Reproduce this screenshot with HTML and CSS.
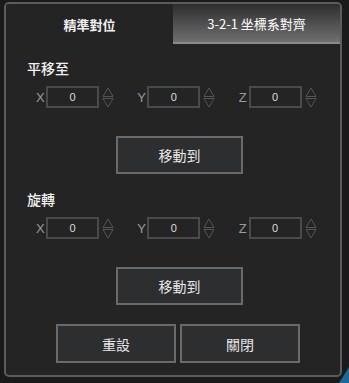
FILE: index.html
```html
<!DOCTYPE html>
<html>
<head>
<meta charset="utf-8">
<link rel="stylesheet" href="styles.css">
</head>
<body>
<div class="panel">
  <div class="tabs">
    <div class="tab active">精準對位</div>
    <div class="tab">3-2-1 坐標系對齊</div>
  </div>
  <div class="content">
    <div class="title t1">平移至</div>
    <div class="row">
      <div class="grp"><span class="lbl">X</span><span class="box">0</span><span class="spin"><svg width="12" height="21" viewBox="0 0 12 21"><path d="M1 9.5 L6 1 L11 9.5 Z M1 11.5 L6 20 L11 11.5 Z" fill="none" stroke="#555" stroke-width="1"/></svg></span></div>
      <div class="grp"><span class="lbl">Y</span><span class="box">0</span><span class="spin"><svg width="12" height="21" viewBox="0 0 12 21"><path d="M1 9.5 L6 1 L11 9.5 Z M1 11.5 L6 20 L11 11.5 Z" fill="none" stroke="#555" stroke-width="1"/></svg></span></div>
      <div class="grp"><span class="lbl">Z</span><span class="box">0</span><span class="spin"><svg width="12" height="21" viewBox="0 0 12 21"><path d="M1 9.5 L6 1 L11 9.5 Z M1 11.5 L6 20 L11 11.5 Z" fill="none" stroke="#555" stroke-width="1"/></svg></span></div>
    </div>
    <div class="center"><div class="btn move">移動到</div></div>
    <div class="title t2">旋轉</div>
    <div class="row">
      <div class="grp"><span class="lbl">X</span><span class="box">0</span><span class="spin"><svg width="12" height="21" viewBox="0 0 12 21"><path d="M1 9.5 L6 1 L11 9.5 Z M1 11.5 L6 20 L11 11.5 Z" fill="none" stroke="#555" stroke-width="1"/></svg></span></div>
      <div class="grp"><span class="lbl">Y</span><span class="box">0</span><span class="spin"><svg width="12" height="21" viewBox="0 0 12 21"><path d="M1 9.5 L6 1 L11 9.5 Z M1 11.5 L6 20 L11 11.5 Z" fill="none" stroke="#555" stroke-width="1"/></svg></span></div>
      <div class="grp"><span class="lbl">Z</span><span class="box">0</span><span class="spin"><svg width="12" height="21" viewBox="0 0 12 21"><path d="M1 9.5 L6 1 L11 9.5 Z M1 11.5 L6 20 L11 11.5 Z" fill="none" stroke="#555" stroke-width="1"/></svg></span></div>
    </div>
    <div class="center"><div class="btn move">移動到</div></div>
    <div class="bottom">
      <div class="btn half">重設</div>
      <div class="btn half">關閉</div>
    </div>
  </div>
</div>
<div class="corner"></div>
</body>
</html>
```
FILE: styles.css
```css
html, body {
  margin: 0;
  padding: 0;
}
body {
  width: 349px;
  height: 383px;
  background: #1a1a1c;
  font-family: "Noto Sans CJK TC", "Noto Sans", sans-serif;
  position: relative;
  overflow: hidden;
}
.panel {
  position: relative;
  margin: 2px 0 0 4px;
  width: 334px;
  height: 371px;
  background: #242424;
  border: 2px solid #5c5c5c;
  border-radius: 5px;
  overflow: hidden;
}
.tabs {
  display: flex;
  height: 40px;
}
.tab {
  flex: 1;
  display: flex;
  align-items: center;
  justify-content: center;
  color: #f0f0f0;
  font-size: 13px;
  font-weight: bold;
}
.tab.active {
  background: #242424;
}
.tab:not(.active) {
  font-weight: normal;
  background: linear-gradient(#2e2e2e, #6f6f6f);
  border-bottom: 2px solid #8a8a8a;
  color: #ffffff;
}
.content {
  padding: 0 0 0 21px;
}
.title {
  color: #f2f2f2;
  font-size: 14px;
  font-weight: 500;
  height: 20px;
  line-height: 20px;
}
.t1 { margin-top: 14px; }
.t2 { margin-top: 15px; }
.row {
  display: flex;
  margin-top: 8px;
  padding-left: 9px;
  height: 22px;
}
.grp {
  display: flex;
  align-items: center;
  width: 103px;
}
.lbl {
  width: 10px;
  color: #9a9a9a;
  font-size: 13px;
  font-family: "Liberation Sans", sans-serif;
}
.box {
  width: 49px;
  height: 18px;
  border: 2px solid #4a4a4a;
  color: #dcdcdc;
  font-size: 11px;
  display: flex;
  align-items: center;
  justify-content: center;
  font-family: "Liberation Sans", sans-serif;
}
.spin {
  margin-left: 3px;
  display: flex;
}
.center {
  display: flex;
  justify-content: center;
  padding-right: 21px;
  margin-top: 28px;
}
.btn {
  background: #2d2e30;
  border: 2px solid #6a6a6a;
  color: #e6e6e6;
  font-size: 14px;
  display: flex;
  align-items: center;
  justify-content: center;
  box-sizing: border-box;
}
.move {
  width: 127px;
  height: 38px;
  margin-left: 13px;
}
.bottom {
  display: flex;
  gap: 4px;
  margin-top: 19px;
  padding-left: 29px;
}
.half {
  width: 120px;
  height: 39px;
}
.corner {
  position: absolute;
  right: 0;
  bottom: 0;
  width: 0;
  height: 0;
  border-left: 10px solid transparent;
  border-bottom: 16px solid #1a6a95;
}
```
